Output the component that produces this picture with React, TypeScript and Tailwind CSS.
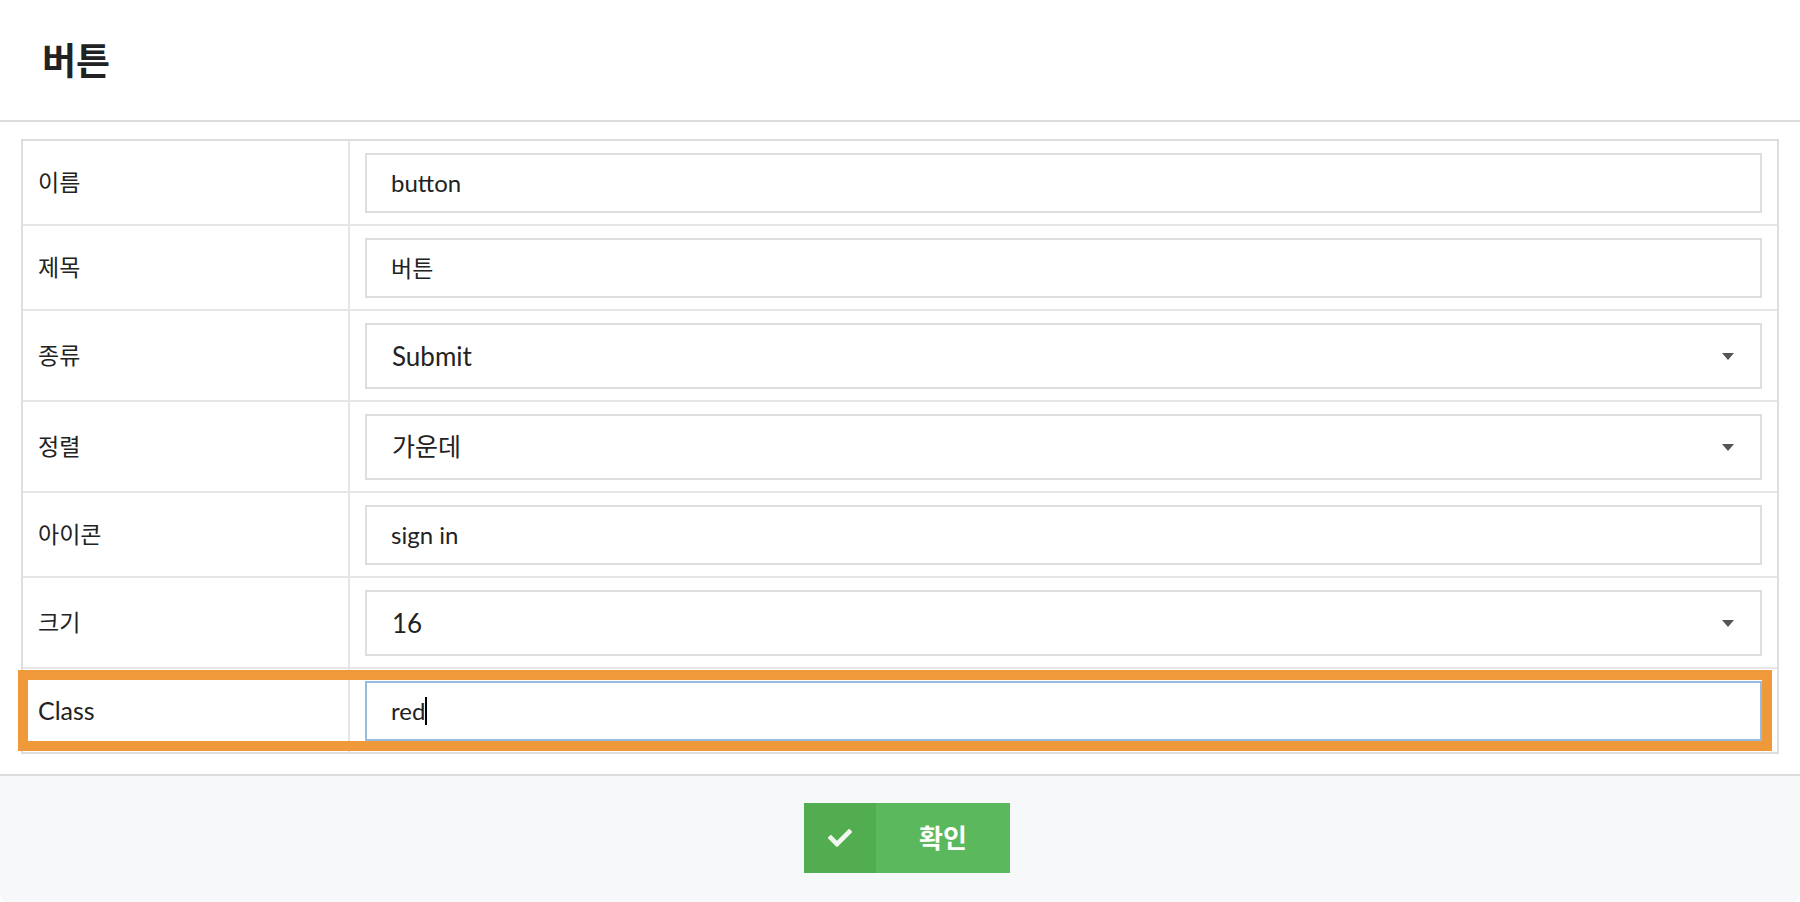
import React from 'react';
import { FaCheck } from 'react-icons/fa';

type Field = {
  label: string;
  value: string;
  kind: 'text' | 'select';
  focused?: boolean;
};

const fields: Field[] = [
  { label: '이름', value: 'button', kind: 'text' },
  { label: '제목', value: '버튼', kind: 'text' },
  { label: '종류', value: 'Submit', kind: 'select' },
  { label: '정렬', value: '가운데', kind: 'select' },
  { label: '아이콘', value: 'sign in', kind: 'text' },
  { label: '크기', value: '16', kind: 'select' },
  { label: 'Class', value: 'red', kind: 'text', focused: true },
];

const font = { fontFamily: 'Lato, "Noto Sans CJK KR", sans-serif' };

// hangul reads a touch smaller than the latin text in the shot
const isKorean = (s: string) => /[\uac00-\ud7a3]/.test(s);

function Caret() {
  return (
    <svg width="12" height="7" viewBox="0 0 12 7" className="text-[#555]">
      <path d="M0 0h12L6 7z" fill="currentColor" />
    </svg>
  );
}

export default function App() {
  return (
    <div className="min-h-screen bg-white" style={font}>
      <div className="w-[1800px] h-[902px] bg-white rounded-[8px] overflow-hidden flex flex-col">
        {/* Header */}
        <header className="h-[122px] shrink-0 flex items-center px-[42px] border-b-2 border-[#dcdcdc]">
          <h1 className="text-[37px] font-bold text-[#222] leading-none">버튼</h1>
        </header>

        {/* Form table */}
        <div className="mt-[17px] mx-[21px] border-2 border-[#dedede]">
          {fields.map((f, i) => (
            <div
              key={f.label}
              className={`relative flex ${i > 0 ? 'border-t-2 border-[#e6e6e6]' : ''}`}
            >
              <div
                className={`w-[327px] shrink-0 border-r-2 border-[#e6e6e6] px-[15px] flex items-center text-[#222] ${
                  isKorean(f.label) ? 'text-[23px]' : 'text-[25px]'
                }`}
              >
                {f.label}
              </div>
              <div className="flex-1 px-[15px] pt-[12px] pb-[11px]">
                {f.kind === 'text' ? (
                  <div
                    className={`h-[60px] border-2 ${
                      f.focused ? 'border-[#98bcdf]' : 'border-[#dedede]'
                    } pl-[24px] pr-[23px] flex items-center text-[#222] ${
                      isKorean(f.value) ? 'text-[23px]' : 'text-[24px]'
                    }`}
                  >
                    {f.value}
                    {f.focused && <span className="inline-block w-[2px] h-[28px] bg-black" />}
                  </div>
                ) : (
                  <div
                    className={`h-[66px] border-2 border-[#dedede] pl-[25px] pr-[26px] flex items-center justify-between text-[#222] ${
                      isKorean(f.value) ? 'text-[25px]' : 'text-[26px]'
                    }`}
                  >
                    <span>{f.value}</span>
                    <Caret />
                  </div>
                )}
              </div>
              {f.focused && (
                <div className="absolute left-[-5px] top-[1px] w-[1754px] h-[81px] border-[10px] border-[#f0993a] pointer-events-none" />
              )}
            </div>
          ))}
        </div>

        {/* Footer */}
        <footer className="mt-[20px] flex-1 bg-[#f7f8fa] border-t-2 border-[#dcdcdc] flex justify-center items-start pt-[27px] pl-[14px]">
          <button className="flex h-[70px] bg-[#5cb85c] text-white">
            <span className="w-[72px] flex items-center justify-center bg-[#51ad4f]">
              <FaCheck className="w-[24px] h-[24px] text-[#f2f7f0]" />
            </span>
            <span className="w-[134px] flex items-center justify-center text-[26px] font-bold">확인</span>
          </button>
        </footer>
      </div>
    </div>
  );
}
